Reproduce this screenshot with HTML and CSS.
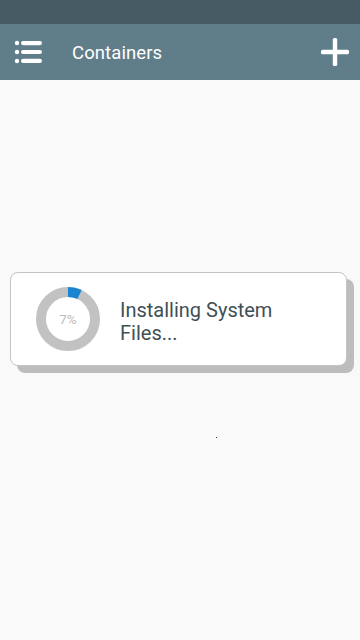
FILE: index.html
```html
<!DOCTYPE html>
<html>
<head>
<meta charset="utf-8">
<link rel="stylesheet" href="styles.css">
</head>
<body>
<div class="screen">
  <div class="statusbar"></div>
  <header class="appbar">
    <svg class="menu-icon" width="28" height="24" viewBox="0 0 28 24">
      <g fill="#fff">
        <circle cx="3" cy="3" r="2.2"/>
        <circle cx="3" cy="12" r="2.2"/>
        <circle cx="3" cy="21" r="2.2"/>
        <rect x="7" y="1" width="21" height="4.2" rx="2.1"/>
        <rect x="7" y="9.9" width="21" height="4.2" rx="2.1"/>
        <rect x="7" y="18.8" width="21" height="4.2" rx="2.1"/>
      </g>
    </svg>
    <h1 class="title">Containers</h1>
    <svg class="add-icon" width="28" height="28" viewBox="0 0 28 28">
      <g fill="#fff">
        <rect x="0" y="11.8" width="28" height="4.4" rx="1.5"/>
        <rect x="11.8" y="0" width="4.4" height="28" rx="1.5"/>
      </g>
    </svg>
  </header>
  <main class="content">
    <div class="dialog">
      <div class="ring">
        <svg width="64" height="64" viewBox="0 0 64 64">
          <circle cx="32" cy="32" r="27" fill="none" stroke="#c2c2c2" stroke-width="10"/>
          <circle cx="32" cy="32" r="27" fill="none" stroke="#1985d1" stroke-width="10"
            stroke-dasharray="11.9 200" transform="rotate(-90 32 32)"/>
        </svg>
        <span class="pct">7%</span>
      </div>
      <div class="message">Installing System<br>Files...</div>
    </div>
    <div class="dot"></div>
  </main>
</div>
</body>
</html>
```

FILE: styles.css
```css
html, body {
  margin: 0;
  padding: 0;
}
body {
  font-family: Roboto, "Noto Sans", "Liberation Sans", sans-serif;
  background: #f8f8f8;
}
.screen {
  width: 360px;
  height: 640px;
  display: flex;
  flex-direction: column;
  overflow: hidden;
}
.statusbar {
  height: 24px;
  background: #475b64;
}
.appbar {
  height: 56px;
  background: #607d8a;
  display: flex;
  align-items: center;
  padding: 0 11px 0 14px;
}
.menu-icon {
  flex: none;
}
.title {
  margin: 2px 0 0 30px;
  font-size: 18.5px;
  font-weight: 400;
  color: #fff;
  flex: 1;
  letter-spacing: 0.1px;
}
.add-icon {
  flex: none;
}
.content {
  flex: 1;
  position: relative;
  background: #f9f9f9;
}
.dialog {
  margin: 192px 0 0 10px;
  box-sizing: border-box;
  width: 337px;
  height: 94px;
  border: 1px solid #c4c4c4;
  border-radius: 8px;
  background: #fff;
  box-shadow: 7px 7px 0 #bdbdbd;
  display: flex;
  align-items: center;
  padding: 0 0 0 25px;
}
.ring {
  position: relative;
  width: 64px;
  height: 64px;
  flex: none;
}
.ring svg {
  display: block;
}
.pct {
  position: absolute;
  inset: 0;
  display: flex;
  align-items: center;
  justify-content: center;
  font-size: 13.5px;
  color: #bcbcbc;
}
.message {
  margin-left: 20px;
  padding-top: 5px;
  font-size: 20px;
  line-height: 23px;
  color: #3f4f56;
}
.dot {
  position: absolute;
  left: 216px;
  top: 357px;
  width: 1px;
  height: 1px;
  background: #333;
}
```
